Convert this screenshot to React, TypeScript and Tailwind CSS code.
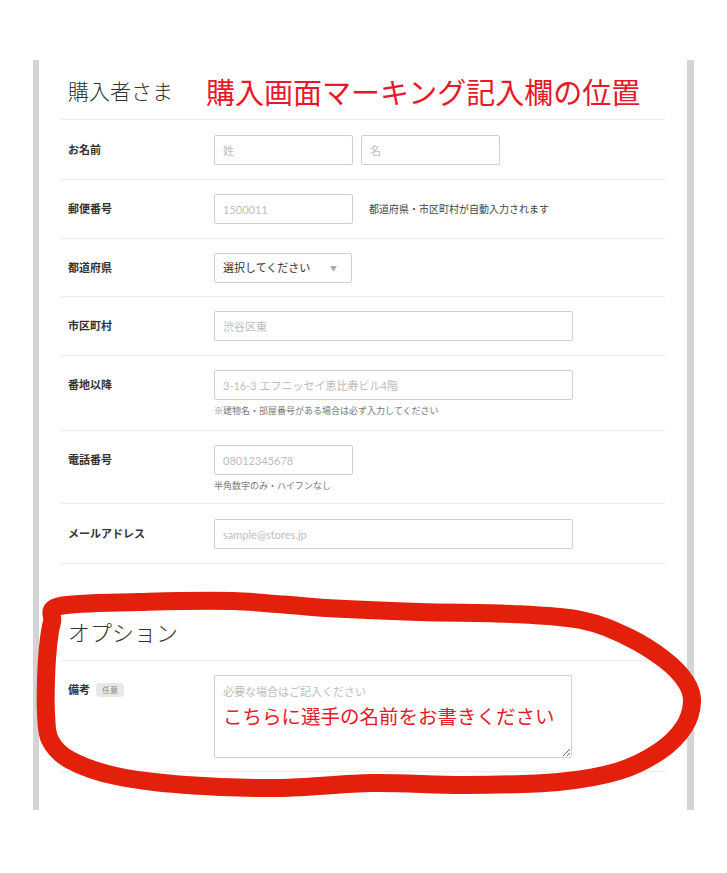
import React from "react";

const jp = "font-['Lato','Noto_Sans_CJK_JP',sans-serif]";

// hand-drawn marker loop, smoothed through these points
const loopPoints: [number, number][] = [
  [60, 606], [140, 602], [233, 601], [326, 608], [419, 612], [512, 614],
  [581, 620], [628, 637], [665, 660], [686, 682], [692, 702], [684, 727],
  [660, 751], [619, 771], [558, 782], [465, 785], [372, 783], [279, 788],
  [186, 785], [116, 776], [70, 760], [50, 740], [46, 713], [46, 680],
  [48, 647], [52, 622],
];

function smoothPath(pts: [number, number][]) {
  const n = pts.length;
  let d = `M ${pts[0][0]} ${pts[0][1]}`;
  for (let i = 0; i < n; i++) {
    const p0 = pts[(i - 1 + n) % n];
    const p1 = pts[i];
    const p2 = pts[(i + 1) % n];
    const p3 = pts[(i + 2) % n];
    const c1x = p1[0] + (p2[0] - p0[0]) / 6;
    const c1y = p1[1] + (p2[1] - p0[1]) / 6;
    const c2x = p2[0] - (p3[0] - p1[0]) / 6;
    const c2y = p2[1] - (p3[1] - p1[1]) / 6;
    d += ` C ${c1x} ${c1y} ${c2x} ${c2y} ${p2[0]} ${p2[1]}`;
  }
  return d;
}

function Row({
  label,
  badge,
  pad = "pt-[14px] pb-[14px]",
  children,
}: {
  label: string;
  badge?: string;
  pad?: string;
  children: React.ReactNode;
}) {
  return (
    <div className={`flex border-b border-[#ececec] pl-[7px] ${pad}`}>
      <div className="w-[146px] shrink-0 h-[30px] flex items-center gap-[6px]">
        <span className="text-[11px] font-bold text-[#333]">{label}</span>
        {badge && (
          <span className="bg-[#e8e8e8] text-[#888] text-[8px] px-[6px] py-[1px] rounded-sm">
            {badge}
          </span>
        )}
      </div>
      <div className="flex-1">{children}</div>
    </div>
  );
}

function Field({ placeholder, w }: { placeholder: string; w: string }) {
  return (
    <input
      placeholder={placeholder}
      className={`${w} h-[30px] border border-[#cfcfcf] rounded-[2px] px-2 text-[11px] placeholder:text-[#bdbdbd] outline-none`}
    />
  );
}

export default function App() {
  return (
    <div className={`relative w-[727px] h-[873px] bg-white ${jp}`}>
      <div className="pt-[60px] px-[33px]">
        <div className="border-l-[6px] border-r-[7px] border-[#d4d4d4] px-[22px] h-[750px]">
          {/* 購入者さま */}
          <div className="flex items-end h-[60px] pb-[12px] pl-[7px] border-b border-[#ececec]">
            <h2 className="text-[21px] font-light text-[#333] leading-none mb-[6px]">
              購入者さま
            </h2>
            <span className="ml-[33px] text-[29px] leading-none text-[#e8182b]">
              購入画面マーキング記入欄の位置
            </span>
          </div>

          <Row label="お名前" pad="pt-[15px] pb-[14px]">
            <div className="flex gap-2">
              <Field placeholder="姓" w="w-[139px]" />
              <Field placeholder="名" w="w-[139px]" />
            </div>
          </Row>

          <Row label="郵便番号">
            <div className="flex items-center gap-4">
              <Field placeholder="1500011" w="w-[139px]" />
              <span className="text-[10px] text-[#444]">
                都道府県・市区町村が自動入力されます
              </span>
            </div>
          </Row>

          <Row label="都道府県" pad="pt-[14px] pb-[13px]">
            <div className="w-[138px] h-[30px] border border-[#cfcfcf] rounded-[2px] px-2 flex items-center justify-between">
              <span className="text-[11px] text-[#333]">選択してください</span>
              <span className="text-[7px] text-[#aaa] mr-[6px]">▼</span>
            </div>
          </Row>

          <Row label="市区町村">
            <Field placeholder="渋谷区東" w="w-[359px]" />
          </Row>

          <Row label="番地以降" pad="pt-[14px] pb-[13px]">
            <Field placeholder="3-16-3 エフニッセイ恵比寿ビル4階" w="w-[359px]" />
            <p className="mt-[5px] text-[9px] text-[#777] leading-[12px]">
              ※建物名・部屋番号がある場合は必ず入力してください
            </p>
          </Row>

          <Row label="電話番号" pad="pt-[14px] pb-[12px]">
            <Field placeholder="08012345678" w="w-[139px]" />
            <p className="mt-[6px] text-[9px] text-[#777] leading-[10px]">
              半角数字のみ・ハイフンなし
            </p>
          </Row>

          <Row label="メールアドレス" pad="pt-[15px] pb-[14px]">
            <Field placeholder="sample@stores.jp" w="w-[359px]" />
          </Row>

          {/* オプション */}
          <div className="mt-[40px] h-[57px] pl-[7px] flex items-center border-b border-[#ececec]">
            <h2 className="text-[22px] font-light text-[#333]">オプション</h2>
          </div>

          <Row label="備考" badge="任意" pad="pt-[14px] pb-[13px]">
            <div className="relative w-[358px]">
              <textarea
                placeholder="必要な場合はご記入ください"
                className="block w-[358px] h-[83px] border border-[#cfcfcf] rounded-[2px] px-2 pt-[8px] text-[11px] placeholder:text-[#bdbdbd] outline-none"
              />
              <span className="absolute left-[9px] top-[32px] text-[19.5px] leading-none text-[#e8182b] pointer-events-none">
                こちらに選手の名前をお書きください
              </span>
            </div>
          </Row>
        </div>
      </div>

      <svg
        className="absolute top-0 left-0 pointer-events-none"
        width="727"
        height="873"
        viewBox="0 0 727 873"
      >
        <path
          d={smoothPath(loopPoints)}
          fill="none"
          stroke="#e3200b"
          strokeWidth="18"
          strokeLinejoin="round"
        />
      </svg>
    </div>
  );
}
